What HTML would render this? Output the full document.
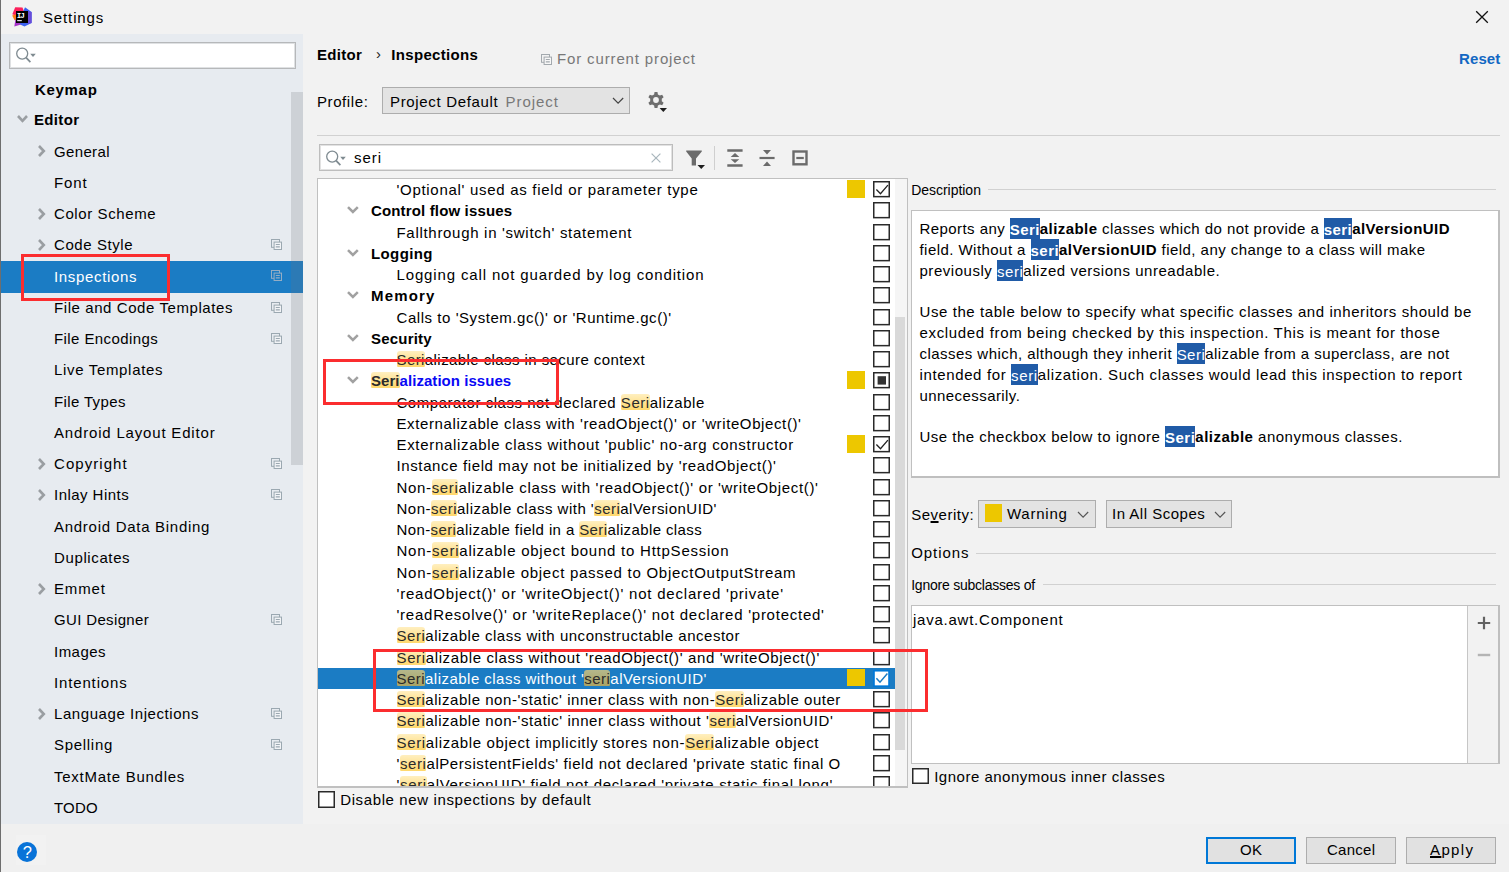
<!DOCTYPE html>
<html><head><meta charset="utf-8"><title>Settings</title>
<style>
html,body{margin:0;padding:0;background:#f2f2f2}
#r{position:relative;width:1509px;height:872px;overflow:hidden;font-family:'Liberation Sans',sans-serif;font-size:15px;line-height:17px;color:#000}
#r div,#r svg,#r .t{position:absolute;display:block}
#r div div,#r div svg,#r div .t{position:absolute}
.t{white-space:pre}
.h{background:linear-gradient(#ffefc0,#ffd86c) no-repeat 0 0/100% 16px;border-radius:3px;color:#2b2b2b}
.hs{background:linear-gradient(#b5b88c,#a9a364) no-repeat 0 0/100% 16px;border-radius:3px;color:#2b2b2b}
.d{background:#205ba7;color:#fff;padding:2.5px 0 2.3px}
b{font-weight:700}
u{text-decoration-thickness:1.6px;text-underline-offset:0.6px}
</style></head>
<body><div id="r">
<div style="left:0px;top:0px;width:1509px;height:872px;background:#f2f2f2"></div>
<div style="left:0px;top:0px;width:1px;height:872px;background:#6e6e6e"></div>
<div style="left:0px;top:824px;width:1509px;height:48px;background:#f0f0f0"></div>
<div style="left:0px;top:0px;width:1px;height:872px;background:#6e6e6e"></div>
<div style="left:1px;top:34px;width:302px;height:790px;background:#e7ebf0"></div>
<svg style="left:12px;top:7px" width="20" height="20" viewBox="0 0 20 20">
<polygon points="3.2,0.2 10.5,0.6 12,4.5 4.5,9 0.3,7.2" fill="#fc1f5b"/>
<polygon points="0.2,8.6 3.8,7.2 5.5,12.5 2.6,13.2" fill="#fd7a16"/>
<polygon points="13,0.2 19.6,5 19.6,16 12.5,19.6 7,17 11,5" fill="#3a62f0"/>
<polygon points="15,4 19.6,5 19.6,16 15.5,17" fill="#6a4bd8"/>
<polygon points="3.5,12 9,17.5 2.3,19.6" fill="#a532c8"/>
<rect x="4" y="4" width="12" height="12" fill="#000"/>
<rect x="5.2" y="13" width="4.6" height="1.2" fill="#d8d8d8"/>
<text x="4.7" y="10.9" font-family="Liberation Mono, monospace" font-weight="700" font-size="7.6" fill="#fff" letter-spacing="-0.9">IJ</text>
</svg>
<span class="t" style="left:43px;top:9px;letter-spacing:0.87px;">Settings</span>
<svg style="left:1475px;top:10px" width="14" height="14" viewBox="0 0 14 14"><path d="M1.2 1.2 L12.8 12.8 M12.8 1.2 L1.2 12.8" stroke="#111" stroke-width="1.3" fill="none"/></svg>
<div style="left:9px;top:41.5px;width:287px;height:27.5px;background:#fff;border:1px solid #b6b8ba;box-sizing:border-box;box-shadow:inset 0 0 0 1px #dfe1e3"></div>
<svg style="left:16px;top:47px" width="22" height="17" viewBox="0 0 22 17"><circle cx="6.2" cy="6.6" r="5.5" fill="none" stroke="#7f8b91" stroke-width="1.3"/><path d="M10.1 10.6 L14.4 15.1" stroke="#7f8b91" stroke-width="1.7" fill="none"/><path d="M14.2 6.7 h5.6 l-2.8 3.2 z" fill="#7f8b91"/></svg>
<div style="left:291px;top:92px;width:12px;height:373px;background:#cdd1d6"></div>
<span class="t" style="left:35px;top:81px;font-weight:700;letter-spacing:0.69px;">Keymap</span>
<span class="t" style="left:34px;top:111px;font-weight:700;letter-spacing:0.33px;">Editor</span>
<svg style="left:15.00px;top:113.25px" width="15.0" height="10.8" viewBox="0 0 15.0 10.8"><path d="M3 3 L7.5 7.8 L12.0 3" stroke="#9a9ea2" stroke-width="2.6" fill="none"/></svg>
<span class="t" style="left:54px;top:143px;letter-spacing:0.35px;">General</span>
<svg style="left:36.30px;top:143.00px" width="10.8" height="16.0" viewBox="0 0 10.8 16.0"><path d="M3 3 L7.8 8.0 L3 13.0" stroke="#9a9ea2" stroke-width="2.6" fill="none"/></svg>
<span class="t" style="left:54px;top:174px;letter-spacing:0.89px;">Font</span>
<span class="t" style="left:54px;top:205px;letter-spacing:0.60px;">Color Scheme</span>
<svg style="left:36.30px;top:205.50px" width="10.8" height="16.0" viewBox="0 0 10.8 16.0"><path d="M3 3 L7.8 8.0 L3 13.0" stroke="#9a9ea2" stroke-width="2.6" fill="none"/></svg>
<span class="t" style="left:54px;top:236px;letter-spacing:0.58px;">Code Style</span>
<svg style="left:36.30px;top:236.75px" width="10.8" height="16.0" viewBox="0 0 10.8 16.0"><path d="M3 3 L7.8 8.0 L3 13.0" stroke="#9a9ea2" stroke-width="2.6" fill="none"/></svg>
<svg style="left:271px;top:239px" width="11" height="11" viewBox="0 0 11 11"><rect x="0.5" y="0.5" width="8" height="7.8" fill="none" stroke="#9ba8b1"/><rect x="3.1" y="3.1" width="7.4" height="7.4" fill="#f1f3f6" stroke="#9ba8b1"/><path d="M4.8 5.5 h4 M4.8 7.9 h4" stroke="#9ba8b1" stroke-width="1.1"/></svg>
<div style="left:1px;top:261px;width:302px;height:32px;background:#1b7cc4"></div>
<div style="left:291px;top:261px;width:12px;height:32px;background:#2c7ab5"></div>
<span class="t" style="left:54px;top:268px;color:#fff;letter-spacing:0.66px;">Inspections</span>
<svg style="left:271px;top:270px" width="11" height="11" viewBox="0 0 11 11"><rect x="0.5" y="0.5" width="8" height="7.8" fill="none" stroke="#94adc4"/><rect x="3.1" y="3.1" width="7.4" height="7.4" fill="#1b7cc4" stroke="#94adc4"/><path d="M4.8 5.5 h4 M4.8 7.9 h4" stroke="#94adc4" stroke-width="1.1"/></svg>
<span class="t" style="left:54px;top:299px;letter-spacing:0.58px;">File and Code Templates</span>
<svg style="left:271px;top:302px" width="11" height="11" viewBox="0 0 11 11"><rect x="0.5" y="0.5" width="8" height="7.8" fill="none" stroke="#9ba8b1"/><rect x="3.1" y="3.1" width="7.4" height="7.4" fill="#f1f3f6" stroke="#9ba8b1"/><path d="M4.8 5.5 h4 M4.8 7.9 h4" stroke="#9ba8b1" stroke-width="1.1"/></svg>
<span class="t" style="left:54px;top:330px;letter-spacing:0.41px;">File Encodings</span>
<svg style="left:271px;top:333px" width="11" height="11" viewBox="0 0 11 11"><rect x="0.5" y="0.5" width="8" height="7.8" fill="none" stroke="#9ba8b1"/><rect x="3.1" y="3.1" width="7.4" height="7.4" fill="#f1f3f6" stroke="#9ba8b1"/><path d="M4.8 5.5 h4 M4.8 7.9 h4" stroke="#9ba8b1" stroke-width="1.1"/></svg>
<span class="t" style="left:54px;top:361px;letter-spacing:0.67px;">Live Templates</span>
<span class="t" style="left:54px;top:393px;letter-spacing:0.37px;">File Types</span>
<span class="t" style="left:54px;top:424px;letter-spacing:0.82px;">Android Layout Editor</span>
<span class="t" style="left:54px;top:455px;letter-spacing:1.06px;">Copyright</span>
<svg style="left:36.30px;top:455.50px" width="10.8" height="16.0" viewBox="0 0 10.8 16.0"><path d="M3 3 L7.8 8.0 L3 13.0" stroke="#9a9ea2" stroke-width="2.6" fill="none"/></svg>
<svg style="left:271px;top:458px" width="11" height="11" viewBox="0 0 11 11"><rect x="0.5" y="0.5" width="8" height="7.8" fill="none" stroke="#9ba8b1"/><rect x="3.1" y="3.1" width="7.4" height="7.4" fill="#f1f3f6" stroke="#9ba8b1"/><path d="M4.8 5.5 h4 M4.8 7.9 h4" stroke="#9ba8b1" stroke-width="1.1"/></svg>
<span class="t" style="left:54px;top:486px;letter-spacing:0.46px;">Inlay Hints</span>
<svg style="left:36.30px;top:486.75px" width="10.8" height="16.0" viewBox="0 0 10.8 16.0"><path d="M3 3 L7.8 8.0 L3 13.0" stroke="#9a9ea2" stroke-width="2.6" fill="none"/></svg>
<svg style="left:271px;top:489px" width="11" height="11" viewBox="0 0 11 11"><rect x="0.5" y="0.5" width="8" height="7.8" fill="none" stroke="#9ba8b1"/><rect x="3.1" y="3.1" width="7.4" height="7.4" fill="#f1f3f6" stroke="#9ba8b1"/><path d="M4.8 5.5 h4 M4.8 7.9 h4" stroke="#9ba8b1" stroke-width="1.1"/></svg>
<span class="t" style="left:54px;top:518px;letter-spacing:0.72px;">Android Data Binding</span>
<span class="t" style="left:54px;top:549px;letter-spacing:0.62px;">Duplicates</span>
<span class="t" style="left:54px;top:580px;letter-spacing:0.87px;">Emmet</span>
<svg style="left:36.30px;top:580.50px" width="10.8" height="16.0" viewBox="0 0 10.8 16.0"><path d="M3 3 L7.8 8.0 L3 13.0" stroke="#9a9ea2" stroke-width="2.6" fill="none"/></svg>
<span class="t" style="left:54px;top:611px;letter-spacing:0.35px;">GUI Designer</span>
<svg style="left:271px;top:614px" width="11" height="11" viewBox="0 0 11 11"><rect x="0.5" y="0.5" width="8" height="7.8" fill="none" stroke="#9ba8b1"/><rect x="3.1" y="3.1" width="7.4" height="7.4" fill="#f1f3f6" stroke="#9ba8b1"/><path d="M4.8 5.5 h4 M4.8 7.9 h4" stroke="#9ba8b1" stroke-width="1.1"/></svg>
<span class="t" style="left:54px;top:643px;letter-spacing:0.48px;">Images</span>
<span class="t" style="left:54px;top:674px;letter-spacing:0.85px;">Intentions</span>
<span class="t" style="left:54px;top:705px;letter-spacing:0.57px;">Language Injections</span>
<svg style="left:36.30px;top:705.50px" width="10.8" height="16.0" viewBox="0 0 10.8 16.0"><path d="M3 3 L7.8 8.0 L3 13.0" stroke="#9a9ea2" stroke-width="2.6" fill="none"/></svg>
<svg style="left:271px;top:708px" width="11" height="11" viewBox="0 0 11 11"><rect x="0.5" y="0.5" width="8" height="7.8" fill="none" stroke="#9ba8b1"/><rect x="3.1" y="3.1" width="7.4" height="7.4" fill="#f1f3f6" stroke="#9ba8b1"/><path d="M4.8 5.5 h4 M4.8 7.9 h4" stroke="#9ba8b1" stroke-width="1.1"/></svg>
<span class="t" style="left:54px;top:736px;letter-spacing:0.70px;">Spelling</span>
<svg style="left:271px;top:739px" width="11" height="11" viewBox="0 0 11 11"><rect x="0.5" y="0.5" width="8" height="7.8" fill="none" stroke="#9ba8b1"/><rect x="3.1" y="3.1" width="7.4" height="7.4" fill="#f1f3f6" stroke="#9ba8b1"/><path d="M4.8 5.5 h4 M4.8 7.9 h4" stroke="#9ba8b1" stroke-width="1.1"/></svg>
<span class="t" style="left:54px;top:768px;letter-spacing:0.74px;">TextMate Bundles</span>
<span class="t" style="left:54px;top:799px;letter-spacing:0.21px;">TODO</span>
<div style="left:16px;top:835px;width:30px;height:30px;background:#f2f2f2"></div>
<svg style="left:17px;top:842px" width="20" height="20" viewBox="0 0 20 20"><circle cx="10" cy="10" r="10" fill="#0873d8"/><text x="10.4" y="16" text-anchor="middle" font-family="Liberation Sans, sans-serif" font-size="16.5" fill="#fff">?</text></svg>
<span class="t" style="left:317px;top:46px;font-weight:700;letter-spacing:0.29px;">Editor</span>
<span class="t" style="left:376px;top:45px;color:#222;">›</span>
<span class="t" style="left:391.3px;top:46px;font-weight:700;letter-spacing:0.32px;">Inspections</span>
<svg style="left:541px;top:54px" width="11" height="11" viewBox="0 0 11 11"><rect x="0.5" y="0.5" width="8" height="7.8" fill="none" stroke="#a3a9ae"/><rect x="3.1" y="3.1" width="7.4" height="7.4" fill="#f7f7f7" stroke="#a3a9ae"/><path d="M4.8 5.5 h4 M4.8 7.9 h4" stroke="#a3a9ae" stroke-width="1.1"/></svg>
<span class="t" style="left:557px;top:50px;color:#787878;letter-spacing:0.86px;">For current project</span>
<span class="t" style="left:1459px;top:50px;font-weight:700;color:#1268c3;letter-spacing:0.11px;">Reset</span>
<span class="t" style="left:317px;top:93px;letter-spacing:0.59px;">Profile:</span>
<div style="left:382px;top:86.5px;width:248px;height:27.5px;background:#e3e3e3;border:1px solid #adadad;box-sizing:border-box"></div>
<span class="t" style="left:390px;top:93px;letter-spacing:0.67px;">Project Default</span>
<span class="t" style="left:505.5px;top:93px;color:#787878;letter-spacing:0.97px;">Project</span>
<svg style="left:609.50px;top:94.70px" width="16.2" height="11.2" viewBox="0 0 16.2 11.2"><path d="M3 3 L8.1 8.2 L13.2 3" stroke="#444" stroke-width="1.2" fill="none"/></svg>
<svg style="left:647px;top:91px" width="21" height="22" viewBox="0 0 21 22">
<path d="M7.12 3.41 L7.54 1.03 L10.46 1.03 L10.88 3.41 L12.90 4.57 L15.17 3.76 L16.63 6.28 L14.78 7.83 L14.78 10.17 L16.63 11.72 L15.17 14.24 L12.90 13.43 L10.88 14.59 L10.46 16.97 L7.54 16.97 L7.12 14.59 L5.10 13.43 L2.83 14.24 L1.37 11.72 L3.22 10.17 L3.22 7.83 L1.37 6.28 L2.83 3.76 L5.10 4.57 Z" fill="#6e6e6e"/><circle cx="9" cy="9" r="2.9" fill="#f2f2f2"/>
<path d="M12.6 17 h7.4 l-3.7 3.9 z" fill="#1e1e1e"/></svg>
<div style="left:317px;top:135px;width:1183px;height:1px;background:#d1d1d1"></div>
<div style="left:319px;top:144px;width:354px;height:27px;background:#fff;border:1px solid #bdbdbd;box-sizing:border-box;box-shadow:inset 0 0 0 1px #e2e2e2"></div>
<svg style="left:326px;top:149.5px" width="22" height="17" viewBox="0 0 22 17"><circle cx="6.2" cy="6.6" r="5.5" fill="none" stroke="#7f8b91" stroke-width="1.3"/><path d="M10.1 10.6 L14.4 15.1" stroke="#7f8b91" stroke-width="1.7" fill="none"/><path d="M14.2 6.7 h5.6 l-2.8 3.2 z" fill="#7f8b91"/></svg>
<span class="t" style="left:354px;top:149px;letter-spacing:0.94px;">seri</span>
<svg style="left:651px;top:153px" width="10" height="10" viewBox="0 0 10 10"><path d="M0.6 0.6 L9.4 9.4 M9.4 0.6 L0.6 9.4" stroke="#a9b6bd" stroke-width="1.2" fill="none"/></svg>
<svg style="left:686px;top:150px" width="20" height="20" viewBox="0 0 20 20"><path d="M0.2 0.5 H15.8 V1.6 L10 8.6 V15.4 H5.7 V8.6 L0.2 1.6 Z" fill="#6b6b6b"/><path d="M11.5 14.9 h7.5 l-3.75 4 z" fill="#1e1e1e"/></svg>
<div style="left:714px;top:146px;width:1px;height:24px;background:#cfcfcf"></div>
<svg style="left:727px;top:149px" width="16" height="18" viewBox="0 0 16 18"><path d="M0.3 1.45 H15.6 M0.3 16.55 H15.6" stroke="#6b6b6b" stroke-width="2.5"/><path d="M8 4.1 L12.3 7.9 H3.7 Z M8 14 L12.3 10.3 H3.7 Z" fill="#6b6b6b"/></svg>
<svg style="left:759px;top:149px" width="16" height="18" viewBox="0 0 16 18"><path d="M0.5 9 H15.6" stroke="#6b6b6b" stroke-width="2.2"/><path d="M8 5.5 L12 1.1 H4 Z M8 12.5 L12 16.9 H4 Z" fill="#6b6b6b"/></svg>
<svg style="left:792px;top:150px" width="16" height="16" viewBox="0 0 16 16"><rect x="1.5" y="1.5" width="13" height="12.8" fill="none" stroke="#6b6b6b" stroke-width="2.4"/><path d="M4.3 8 H11.8" stroke="#6b6b6b" stroke-width="2.2"/></svg>
<div style="left:317px;top:178px;width:591px;height:609.5px;background:#fff;border:1px solid #c0c0c0;box-sizing:border-box;border-bottom:2px solid #c0c0c0"></div>
<div style="left:895px;top:179px;width:12px;height:607px;background:#f5f5f5"></div>
<div style="left:895px;top:317px;width:10px;height:433px;background:#d9d9d9"></div>
<div style="left:318px;top:179px;width:577px;height:607px;overflow:hidden">
<span class="t" style="left:78.5px;top:2px;letter-spacing:0.70px;">'Optional' used as field or parameter type</span>
<div style="left:529px;top:1px;width:18px;height:18px;background:#edc700"></div>
<svg style="left:555px;top:2.4000000000000057px" width="17" height="16.4" viewBox="0 0 17 16.4"><rect x="0.75" y="0.75" width="15.5" height="14.9" fill="#fff" stroke="#2a2a2a" stroke-width="1.5"/><path d="M3.4 8.5 L7.5 12.8 L14.9 4.2" stroke="#222" stroke-width="1.3" fill="none"/></svg>
<span class="t" style="left:53px;top:23px;font-weight:700;letter-spacing:0.15px;">Control flow issues</span>
<svg style="left:27.10px;top:24.90px" width="15.8" height="11.0" viewBox="0 0 15.8 11.0"><path d="M3 3 L7.9 8.0 L12.8 3" stroke="#a1a1a1" stroke-width="2.5" fill="none"/></svg>
<svg style="left:555px;top:23.400000000000006px" width="17" height="16.4" viewBox="0 0 17 16.4"><rect x="0.75" y="0.75" width="15.5" height="14.9" fill="#fff" stroke="#2a2a2a" stroke-width="1.5"/></svg>
<span class="t" style="left:78.5px;top:45px;letter-spacing:0.70px;">Fallthrough in 'switch' statement</span>
<svg style="left:555px;top:45.400000000000006px" width="17" height="16.4" viewBox="0 0 17 16.4"><rect x="0.75" y="0.75" width="15.5" height="14.9" fill="#fff" stroke="#2a2a2a" stroke-width="1.5"/></svg>
<span class="t" style="left:53px;top:66px;font-weight:700;letter-spacing:0.39px;">Logging</span>
<svg style="left:27.10px;top:67.90px" width="15.8" height="11.0" viewBox="0 0 15.8 11.0"><path d="M3 3 L7.9 8.0 L12.8 3" stroke="#a1a1a1" stroke-width="2.5" fill="none"/></svg>
<svg style="left:555px;top:66.4px" width="17" height="16.4" viewBox="0 0 17 16.4"><rect x="0.75" y="0.75" width="15.5" height="14.9" fill="#fff" stroke="#2a2a2a" stroke-width="1.5"/></svg>
<span class="t" style="left:78.5px;top:87px;letter-spacing:0.86px;">Logging call not guarded by log condition</span>
<svg style="left:555px;top:87.39999999999998px" width="17" height="16.4" viewBox="0 0 17 16.4"><rect x="0.75" y="0.75" width="15.5" height="14.9" fill="#fff" stroke="#2a2a2a" stroke-width="1.5"/></svg>
<span class="t" style="left:53px;top:108px;font-weight:700;letter-spacing:1.19px;">Memory</span>
<svg style="left:27.10px;top:109.90px" width="15.8" height="11.0" viewBox="0 0 15.8 11.0"><path d="M3 3 L7.9 8.0 L12.8 3" stroke="#a1a1a1" stroke-width="2.5" fill="none"/></svg>
<svg style="left:555px;top:108.39999999999998px" width="17" height="16.4" viewBox="0 0 17 16.4"><rect x="0.75" y="0.75" width="15.5" height="14.9" fill="#fff" stroke="#2a2a2a" stroke-width="1.5"/></svg>
<span class="t" style="left:78.5px;top:130px;letter-spacing:0.55px;">Calls to 'System.gc()' or 'Runtime.gc()'</span>
<svg style="left:555px;top:130.39999999999998px" width="17" height="16.4" viewBox="0 0 17 16.4"><rect x="0.75" y="0.75" width="15.5" height="14.9" fill="#fff" stroke="#2a2a2a" stroke-width="1.5"/></svg>
<span class="t" style="left:53px;top:151px;font-weight:700;letter-spacing:0.21px;">Security</span>
<svg style="left:27.10px;top:152.90px" width="15.8" height="11.0" viewBox="0 0 15.8 11.0"><path d="M3 3 L7.9 8.0 L12.8 3" stroke="#a1a1a1" stroke-width="2.5" fill="none"/></svg>
<svg style="left:555px;top:151.39999999999998px" width="17" height="16.4" viewBox="0 0 17 16.4"><rect x="0.75" y="0.75" width="15.5" height="14.9" fill="#fff" stroke="#2a2a2a" stroke-width="1.5"/></svg>
<span class="t" style="left:78.5px;top:172px;letter-spacing:0.42px;"><span class="h">Seri</span>alizable class in secure context</span>
<svg style="left:555px;top:172.39999999999998px" width="17" height="16.4" viewBox="0 0 17 16.4"><rect x="0.75" y="0.75" width="15.5" height="14.9" fill="#fff" stroke="#2a2a2a" stroke-width="1.5"/></svg>
<span class="t" style="left:53px;top:193px;font-weight:700;letter-spacing:0.05px;"><span class="h">Seri</span><span style="color:#0808f5">alization issues</span></span>
<svg style="left:27.10px;top:194.90px" width="15.8" height="11.0" viewBox="0 0 15.8 11.0"><path d="M3 3 L7.9 8.0 L12.8 3" stroke="#a1a1a1" stroke-width="2.5" fill="none"/></svg>
<div style="left:529px;top:192px;width:18px;height:18px;background:#edc700"></div>
<svg style="left:555px;top:193.39999999999998px" width="17" height="16.4" viewBox="0 0 17 16.4"><rect x="0.75" y="0.75" width="15.5" height="14.9" fill="#fff" stroke="#2a2a2a" stroke-width="1.5"/><rect x="4.6" y="4.2" width="8.4" height="8.4" fill="#333"/></svg>
<span class="t" style="left:78.5px;top:215px;letter-spacing:0.53px;">Comparator class not declared <span class="h">Seri</span>alizable</span>
<svg style="left:555px;top:215.39999999999998px" width="17" height="16.4" viewBox="0 0 17 16.4"><rect x="0.75" y="0.75" width="15.5" height="14.9" fill="#fff" stroke="#2a2a2a" stroke-width="1.5"/></svg>
<span class="t" style="left:78.5px;top:236px;letter-spacing:0.61px;">Externalizable class with 'readObject()' or 'writeObject()'</span>
<svg style="left:555px;top:236.39999999999998px" width="17" height="16.4" viewBox="0 0 17 16.4"><rect x="0.75" y="0.75" width="15.5" height="14.9" fill="#fff" stroke="#2a2a2a" stroke-width="1.5"/></svg>
<span class="t" style="left:78.5px;top:257px;letter-spacing:0.68px;">Externalizable class without 'public' no-arg constructor</span>
<div style="left:529px;top:256px;width:18px;height:18px;background:#edc700"></div>
<svg style="left:555px;top:257.4px" width="17" height="16.4" viewBox="0 0 17 16.4"><rect x="0.75" y="0.75" width="15.5" height="14.9" fill="#fff" stroke="#2a2a2a" stroke-width="1.5"/><path d="M3.4 8.5 L7.5 12.8 L14.9 4.2" stroke="#222" stroke-width="1.3" fill="none"/></svg>
<span class="t" style="left:78.5px;top:278px;letter-spacing:0.62px;">Instance field may not be initialized by 'readObject()'</span>
<svg style="left:555px;top:278.4px" width="17" height="16.4" viewBox="0 0 17 16.4"><rect x="0.75" y="0.75" width="15.5" height="14.9" fill="#fff" stroke="#2a2a2a" stroke-width="1.5"/></svg>
<span class="t" style="left:78.5px;top:300px;letter-spacing:0.65px;">Non-<span class="h">seri</span>alizable class with 'readObject()' or 'writeObject()'</span>
<svg style="left:555px;top:300.4px" width="17" height="16.4" viewBox="0 0 17 16.4"><rect x="0.75" y="0.75" width="15.5" height="14.9" fill="#fff" stroke="#2a2a2a" stroke-width="1.5"/></svg>
<span class="t" style="left:78.5px;top:321px;letter-spacing:0.48px;">Non-<span class="h">seri</span>alizable class with '<span class="h">seri</span>alVersionUID'</span>
<svg style="left:555px;top:321.4px" width="17" height="16.4" viewBox="0 0 17 16.4"><rect x="0.75" y="0.75" width="15.5" height="14.9" fill="#fff" stroke="#2a2a2a" stroke-width="1.5"/></svg>
<span class="t" style="left:78.5px;top:342px;letter-spacing:0.39px;">Non-<span class="h">seri</span>alizable field in a <span class="h">Seri</span>alizable class</span>
<svg style="left:555px;top:342.4px" width="17" height="16.4" viewBox="0 0 17 16.4"><rect x="0.75" y="0.75" width="15.5" height="14.9" fill="#fff" stroke="#2a2a2a" stroke-width="1.5"/></svg>
<span class="t" style="left:78.5px;top:363px;letter-spacing:0.76px;">Non-<span class="h">seri</span>alizable object bound to HttpSession</span>
<svg style="left:555px;top:363.4px" width="17" height="16.4" viewBox="0 0 17 16.4"><rect x="0.75" y="0.75" width="15.5" height="14.9" fill="#fff" stroke="#2a2a2a" stroke-width="1.5"/></svg>
<span class="t" style="left:78.5px;top:385px;letter-spacing:0.73px;">Non-<span class="h">seri</span>alizable object passed to ObjectOutputStream</span>
<svg style="left:555px;top:385.4px" width="17" height="16.4" viewBox="0 0 17 16.4"><rect x="0.75" y="0.75" width="15.5" height="14.9" fill="#fff" stroke="#2a2a2a" stroke-width="1.5"/></svg>
<span class="t" style="left:78.5px;top:406px;letter-spacing:0.79px;">'readObject()' or 'writeObject()' not declared 'private'</span>
<svg style="left:555px;top:406.4px" width="17" height="16.4" viewBox="0 0 17 16.4"><rect x="0.75" y="0.75" width="15.5" height="14.9" fill="#fff" stroke="#2a2a2a" stroke-width="1.5"/></svg>
<span class="t" style="left:78.5px;top:427px;letter-spacing:0.75px;">'readResolve()' or 'writeReplace()' not declared 'protected'</span>
<svg style="left:555px;top:427.4px" width="17" height="16.4" viewBox="0 0 17 16.4"><rect x="0.75" y="0.75" width="15.5" height="14.9" fill="#fff" stroke="#2a2a2a" stroke-width="1.5"/></svg>
<span class="t" style="left:78.5px;top:448px;letter-spacing:0.52px;"><span class="h">Seri</span>alizable class with unconstructable ancestor</span>
<svg style="left:555px;top:448.4px" width="17" height="16.4" viewBox="0 0 17 16.4"><rect x="0.75" y="0.75" width="15.5" height="14.9" fill="#fff" stroke="#2a2a2a" stroke-width="1.5"/></svg>
<span class="t" style="left:78.5px;top:470px;letter-spacing:0.63px;"><span class="h">Seri</span>alizable class without 'readObject()' and 'writeObject()'</span>
<svg style="left:555px;top:470.4px" width="17" height="16.4" viewBox="0 0 17 16.4"><rect x="0.75" y="0.75" width="15.5" height="14.9" fill="#fff" stroke="#2a2a2a" stroke-width="1.5"/></svg>
<div style="left:0px;top:489px;width:577px;height:21px;background:#1b7cc4"></div>
<span class="t" style="left:78.5px;top:491px;color:#fff;letter-spacing:0.47px;"><span class="hs">Seri</span>alizable class without '<span class="hs">seri</span>alVersionUID'</span>
<div style="left:529px;top:490px;width:18px;height:17px;background:#edc700"></div>
<svg style="left:555px;top:491px" width="17" height="17" viewBox="0 0 17 17"><rect x="0.95" y="0.7" width="15.1" height="15.5" fill="#fff" stroke="#0078d7" stroke-width="1.7"/><path d="M3.4 8.2 L7 12.2 L14.4 3.4" stroke="#1b7cc4" stroke-width="1.5" fill="none"/></svg>
<span class="t" style="left:78.5px;top:512px;letter-spacing:0.54px;"><span class="h">Seri</span>alizable non-'static' inner class with non-<span class="h">Seri</span>alizable outer</span>
<svg style="left:555px;top:512.4px" width="17" height="16.4" viewBox="0 0 17 16.4"><rect x="0.75" y="0.75" width="15.5" height="14.9" fill="#fff" stroke="#2a2a2a" stroke-width="1.5"/></svg>
<span class="t" style="left:78.5px;top:533px;letter-spacing:0.55px;"><span class="h">Seri</span>alizable non-'static' inner class without '<span class="h">seri</span>alVersionUID'</span>
<svg style="left:555px;top:533.4px" width="17" height="16.4" viewBox="0 0 17 16.4"><rect x="0.75" y="0.75" width="15.5" height="14.9" fill="#fff" stroke="#2a2a2a" stroke-width="1.5"/></svg>
<span class="t" style="left:78.5px;top:555px;letter-spacing:0.64px;"><span class="h">Seri</span>alizable object implicitly stores non-<span class="h">Seri</span>alizable object</span>
<svg style="left:555px;top:555.4px" width="17" height="16.4" viewBox="0 0 17 16.4"><rect x="0.75" y="0.75" width="15.5" height="14.9" fill="#fff" stroke="#2a2a2a" stroke-width="1.5"/></svg>
<span class="t" style="left:78.5px;top:576px;letter-spacing:0.58px;">'<span class="h">seri</span>alPersistentFields' field not declared 'private static final O</span>
<svg style="left:555px;top:576.4px" width="17" height="16.4" viewBox="0 0 17 16.4"><rect x="0.75" y="0.75" width="15.5" height="14.9" fill="#fff" stroke="#2a2a2a" stroke-width="1.5"/></svg>
<span class="t" style="left:78.5px;top:597px;letter-spacing:0.65px;">'<span class="h">seri</span>alVersionUID' field not declared 'private static final long'</span>
<svg style="left:555px;top:597.4px" width="17" height="16.4" viewBox="0 0 17 16.4"><rect x="0.75" y="0.75" width="15.5" height="14.9" fill="#fff" stroke="#2a2a2a" stroke-width="1.5"/></svg>
</div>
<svg style="left:318px;top:791px" width="17" height="17" viewBox="0 0 17 17"><rect x="0.75" y="0.75" width="15.5" height="15.5" fill="#fff" stroke="#2a2a2a" stroke-width="1.5"/></svg>
<span class="t" style="left:340.2px;top:791px;letter-spacing:0.62px;">Disable new inspections by default</span>
<span class="t" style="left:911.2px;top:182px;font-size:14px;line-height:16px;letter-spacing:-0.03px;">Description</span>
<div style="left:988px;top:189px;width:508px;height:1px;background:#d1d1d1"></div>
<div style="left:911px;top:210px;width:589px;height:268px;background:#fff;border:1px solid #c0c0c0;border-right:2px solid #bfbfbf;border-bottom:2px solid #bfbfbf;box-sizing:border-box"></div>
<span class="t" style="left:919.5px;top:220px;letter-spacing:0.43px;">Reports any <b><span class="d">Seri</span>alizable</b> classes which do not provide a <b><span class="d">seri</span>alVersionUID</b></span>
<span class="t" style="left:919.5px;top:241px;letter-spacing:0.45px;">field. Without a <b><span class="d">seri</span>alVersionUID</b> field, any change to a class will make</span>
<span class="t" style="left:919.5px;top:262px;letter-spacing:0.53px;">previously <span class="d">seri</span>alized versions unreadable.</span>
<span class="t" style="left:919.5px;top:303px;letter-spacing:0.58px;">Use the table below to specify what specific classes and inheritors should be</span>
<span class="t" style="left:919.5px;top:324px;letter-spacing:0.66px;">excluded from being checked by this inspection. This is meant for those</span>
<span class="t" style="left:919.5px;top:345px;letter-spacing:0.46px;">classes which, although they inherit <span class="d">Seri</span>alizable from a superclass, are not</span>
<span class="t" style="left:919.5px;top:366px;letter-spacing:0.63px;">intended for <span class="d">seri</span>alization. Such classes would lead this inspection to report</span>
<span class="t" style="left:919.5px;top:387px;letter-spacing:0.43px;">unnecessarily.</span>
<span class="t" style="left:919.5px;top:428px;letter-spacing:0.49px;">Use the checkbox below to ignore <b><span class="d">Seri</span>alizable</b> anonymous classes.</span>
<span class="t" style="left:911.2px;top:506px;letter-spacing:0.50px;">Se<u>v</u>erity:</span>
<div style="left:978px;top:500px;width:118px;height:28px;background:#e3e3e3;border:1px solid #adadad;box-sizing:border-box"></div>
<div style="left:985px;top:504px;width:17px;height:18px;background:#edc700"></div>
<span class="t" style="left:1007px;top:505px;letter-spacing:0.76px;">Warning</span>
<svg style="left:1075.40px;top:508.70px" width="16.2" height="11.2" viewBox="0 0 16.2 11.2"><path d="M3 3 L8.1 8.2 L13.2 3" stroke="#555" stroke-width="1.15" fill="none"/></svg>
<div style="left:1106px;top:500px;width:126px;height:28px;background:#e3e3e3;border:1px solid #adadad;box-sizing:border-box"></div>
<span class="t" style="left:1112px;top:505px;letter-spacing:0.50px;">In All Scopes</span>
<svg style="left:1211.90px;top:508.70px" width="16.2" height="11.2" viewBox="0 0 16.2 11.2"><path d="M3 3 L8.1 8.2 L13.2 3" stroke="#555" stroke-width="1.15" fill="none"/></svg>
<span class="t" style="left:911.3px;top:544px;letter-spacing:0.90px;">Options</span>
<div style="left:976px;top:553px;width:520px;height:1px;background:#d1d1d1"></div>
<span class="t" style="left:911.2px;top:577px;font-size:14px;line-height:16px;letter-spacing:-0.23px;">Ignore subclasses of</span>
<div style="left:1043px;top:584px;width:453px;height:1px;background:#d1d1d1"></div>
<div style="left:911px;top:605px;width:589px;height:159px;background:#fff;border:1px solid #c0c0c0;border-right:2px solid #bfbfbf;box-sizing:border-box"></div>
<div style="left:1467px;top:606px;width:31px;height:157px;background:#f2f2f2;border-left:1px solid #c6c6c6;box-sizing:border-box"></div>
<span class="t" style="left:913px;top:611px;letter-spacing:0.76px;">java.awt.Component</span>
<svg style="left:1477px;top:616px" width="14" height="14" viewBox="0 0 14 14"><path d="M7 0.8 V13.2 M0.8 7 H13.2" stroke="#626262" stroke-width="2.2"/></svg>
<svg style="left:1477px;top:648px" width="14" height="14" viewBox="0 0 14 14"><path d="M0.8 7 H13.2" stroke="#b4b4b4" stroke-width="2.4"/></svg>
<svg style="left:912px;top:768px" width="17" height="16" viewBox="0 0 17 16"><rect x="0.75" y="0.75" width="15.5" height="14.5" fill="#fff" stroke="#2a2a2a" stroke-width="1.5"/></svg>
<span class="t" style="left:934.2px;top:768px;letter-spacing:0.50px;">Ignore anonymous inner classes</span>
<div style="left:1206px;top:836.5px;width:90px;height:27.3px;background:#e1e1e1;box-sizing:border-box;border:2px solid #0078d7"></div>
<span class="t" style="left:1240px;top:841px;letter-spacing:0.31px;">OK</span>
<div style="left:1306px;top:836.5px;width:90px;height:27.3px;background:#e1e1e1;box-sizing:border-box;border:1px solid #adadad"></div>
<span class="t" style="left:1327px;top:841px;letter-spacing:0.26px;">Cancel</span>
<div style="left:1406px;top:836.5px;width:90px;height:27.3px;background:#e1e1e1;box-sizing:border-box;border:1px solid #adadad"></div>
<span class="t" style="left:1430px;top:841px;letter-spacing:1.36px;"><u>A</u>pply</span>
<div style="left:21px;top:254.3px;width:149px;height:46.39999999999998px;border:3px solid #fb2d2f;box-sizing:border-box"></div>
<div style="left:323px;top:359px;width:236px;height:46px;border:3px solid #fb2d2f;box-sizing:border-box"></div>
<div style="left:373px;top:649px;width:555px;height:63px;border:3px solid #fb2d2f;box-sizing:border-box"></div>
</div></body></html>
